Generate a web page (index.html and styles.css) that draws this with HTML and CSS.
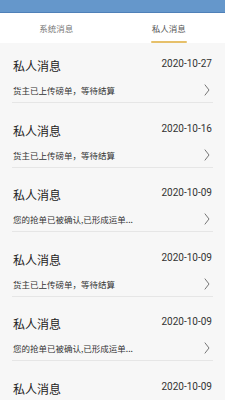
FILE: index.html
```html
<!DOCTYPE html>
<html lang="zh">
<head>
<meta charset="utf-8">
<link rel="stylesheet" href="styles.css">
</head>
<body>
<div class="status"></div>
<div class="tabs">
  <div class="tab">系统消息</div>
  <div class="tab active">私人消息</div>
</div>
<div class="list">
  <div class="item">
    <div class="row"><span class="title">私人消息</span><span class="date">2020-10-27</span></div>
    <div class="row sub"><span class="text">货主已上传磅单，等待结算</span><svg class="chev" viewBox="0 0 6 12"><path d="M0.8 0.6 L5 6 L0.8 11.4"/></svg></div>
  </div>
  <div class="item">
    <div class="row"><span class="title">私人消息</span><span class="date">2020-10-16</span></div>
    <div class="row sub"><span class="text">货主已上传磅单，等待结算</span><svg class="chev" viewBox="0 0 6 12"><path d="M0.8 0.6 L5 6 L0.8 11.4"/></svg></div>
  </div>
  <div class="item">
    <div class="row"><span class="title">私人消息</span><span class="date">2020-10-09</span></div>
    <div class="row sub"><span class="text">您的抢单已被确认,已形成运单...</span><svg class="chev" viewBox="0 0 6 12"><path d="M0.8 0.6 L5 6 L0.8 11.4"/></svg></div>
  </div>
  <div class="item">
    <div class="row"><span class="title">私人消息</span><span class="date">2020-10-09</span></div>
    <div class="row sub"><span class="text">货主已上传磅单，等待结算</span><svg class="chev" viewBox="0 0 6 12"><path d="M0.8 0.6 L5 6 L0.8 11.4"/></svg></div>
  </div>
  <div class="item">
    <div class="row"><span class="title">私人消息</span><span class="date">2020-10-09</span></div>
    <div class="row sub"><span class="text">您的抢单已被确认,已形成运单...</span><svg class="chev" viewBox="0 0 6 12"><path d="M0.8 0.6 L5 6 L0.8 11.4"/></svg></div>
  </div>
  <div class="item">
    <div class="row"><span class="title">私人消息</span><span class="date">2020-10-09</span></div>
    <div class="row sub"><span class="text">货主已上传磅单，等待结算</span><svg class="chev" viewBox="0 0 6 12"><path d="M0.8 0.6 L5 6 L0.8 11.4"/></svg></div>
  </div>
</div>
</body>
</html>
```
FILE: styles.css
```css
html, body {
  margin: 0;
  padding: 0;
  height: 400px;
  overflow: hidden;
  background: #f7f7f7;
  font-family: Roboto, "Noto Sans CJK SC", sans-serif;
}
.status {
  height: 12px;
  background: #6597cb;
  border-bottom: 1px solid #4f80b8;
}
.tabs {
  display: flex;
  height: 30px;
  background: #ffffff;
}
.tab {
  flex: 1;
  display: flex;
  align-items: center;
  justify-content: center;
  font-family: "Noto Sans CJK SC", sans-serif;
  font-size: 8.5px;
  color: #777777;
  position: relative;
}
.tab.active {
  color: #555555;
}
.tab.active::after {
  content: "";
  position: absolute;
  left: 50%;
  bottom: 0;
  width: 36px;
  margin-left: -18px;
  height: 2px;
  background: #e6c06a;
  border-radius: 1px;
}
.list {
  padding: 0 12px;
}
.item {
  padding: 14px 1px 5px;
  border-bottom: 1px solid #e6e6e6;
  margin-bottom: 4.5px;
}
.row {
  display: flex;
  justify-content: space-between;
  align-items: center;
}
.title {
  font-family: "Noto Sans CJK SC", sans-serif;
  font-size: 12px;
  line-height: 18px;
  color: #222222;
}
.date {
  font-size: 10px;
  line-height: 14px;
  color: #333333;
  margin-bottom: 4px;
}
.sub {
  margin-top: 8px;
  height: 14px;
}
.text {
  font-family: "Noto Sans CJK SC", sans-serif;
  font-size: 8.5px;
  color: #333333;
}
.chev {
  width: 6px;
  height: 12px;
  margin-right: 2px;
  fill: none;
  stroke: #555555;
  stroke-width: 0.8;
}
```
